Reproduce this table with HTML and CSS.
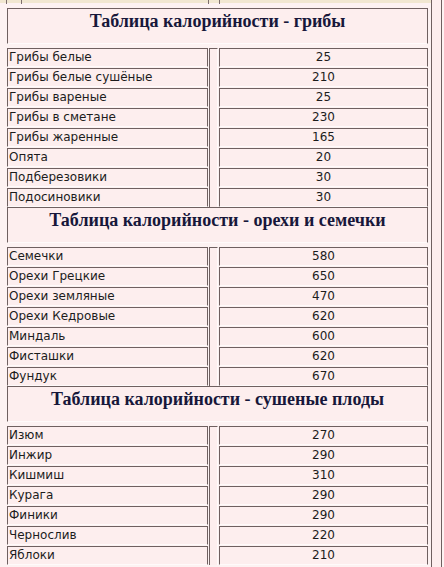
FILE: index.html
```html
<!DOCTYPE html>
<html lang="ru">
<head>
<meta charset="utf-8">
<title>Таблица калорийности</title>
<link rel="stylesheet" href="styles.css">
</head>
<body>
<div class="page">
  <div class="main">
    <div class="topband"><span class="tick"></span><span class="tick"></span><span class="tick"></span><span class="tick"></span></div>

    <section class="sec">
      <h2 class="hd">Таблица калорийности - грибы</h2>
      <div class="sp sp8"></div>
      <div class="nm">Грибы белые</div><div class="vl">25</div>
      <div class="nm">Грибы белые сушёные</div><div class="vl">210</div>
      <div class="nm">Грибы вареные</div><div class="vl">25</div>
      <div class="nm">Грибы в сметане</div><div class="vl">230</div>
      <div class="nm">Грибы жаренные</div><div class="vl">165</div>
      <div class="nm">Опята</div><div class="vl">20</div>
      <div class="nm">Подберезовики</div><div class="vl">30</div>
      <div class="nm">Подосиновики</div><div class="vl">30</div>
    </section>

    <section class="sec">
      <h2 class="hd">Таблица калорийности - орехи и семечки</h2>
      <div class="sp sp7"></div>
      <div class="nm">Семечки</div><div class="vl">580</div>
      <div class="nm">Орехи Грецкие</div><div class="vl">650</div>
      <div class="nm">Орехи земляные</div><div class="vl">470</div>
      <div class="nm">Орехи Кедровые</div><div class="vl">620</div>
      <div class="nm">Миндаль</div><div class="vl">600</div>
      <div class="nm">Фисташки</div><div class="vl">620</div>
      <div class="nm">Фундук</div><div class="vl">670</div>
    </section>

    <section class="sec">
      <h2 class="hd">Таблица калорийности - сушеные плоды</h2>
      <div class="sp sp7"></div>
      <div class="nm">Изюм</div><div class="vl">270</div>
      <div class="nm">Инжир</div><div class="vl">290</div>
      <div class="nm">Кишмиш</div><div class="vl">310</div>
      <div class="nm">Курага</div><div class="vl">290</div>
      <div class="nm">Финики</div><div class="vl">290</div>
      <div class="nm">Чернослив</div><div class="vl">220</div>
      <div class="nm">Яблоки</div><div class="vl">210</div>
    </section>
  </div>
  <div class="rstrip"></div>
</div>
</body>
</html>
```

FILE: styles.css
```css
html, body {
  margin: 0;
  padding: 0;
  background: #fdf2f2;
}

.page {
  display: flex;
  align-items: stretch;
  min-height: 567px;
  overflow: hidden;
}

.main {
  width: 421px;
  padding-left: 7px;
  flex: none;
}

.topband {
  display: flex;
  height: 3px;
  margin-left: -7px;
  margin-right: -3px;
  margin-bottom: 5px;
  background: #f1e7d1;
}

.tick {
  width: 1px;
  height: 4px;
  background: #7d6e6e;
  flex: none;
}
.tick:nth-child(1) { margin-left: 6px; }
.tick:nth-child(2) { margin-left: 14px; }
.tick:nth-child(3) { margin-left: 186px; }
.tick:nth-child(4) { margin-left: 10px; }

.sec {
  display: grid;
  grid-template-columns: 201px 9px 209px;
  column-gap: 1px;
  row-gap: 1px;
}

.hd {
  grid-column: 1 / -1;
  grid-row: 1;
  margin: 0 0 3px 0;
  height: 36px;
  box-sizing: border-box;
  padding: 2px 0 0 0;
  border: 1px solid #6f6060;
  border-bottom-color: #fffafa;
  background: #fdeeee;
  font-family: "Liberation Serif", "Times New Roman", serif;
  font-weight: bold;
  font-size: 18px;
  line-height: 21px;
  color: #17173a;
  text-align: center;
}

.sp {
  grid-column: 2;
  box-sizing: border-box;
  border-left: 1px solid #6f6060;
  border-top: 1px solid #6f6060;
  border-right: 1px solid #fffafa;
  background: #fdeeee;
}
.sp8 { grid-row: 2 / span 8; }
.sp7 { grid-row: 2 / span 7; }

.nm, .vl {
  box-sizing: border-box;
  height: 19px;
  border: 1px solid #6f6060;
  border-bottom-color: #fffafa;
  background: #fdeeee;
  font-family: "DejaVu Sans", Verdana, sans-serif;
  font-size: 12px;
  line-height: 17px;
  color: #1c1c1c;
  white-space: nowrap;
  overflow: hidden;
}

.nm {
  grid-column: 1;
  padding-left: 1px;
}

.vl {
  grid-column: 3;
  text-align: center;
}

.rstrip {
  flex: none;
  width: 11px;
  margin-left: 3px;
  box-sizing: border-box;
  border-left: 1px solid #6f6060;
  border-right: 1px solid #6f6060;
  background: #fdeeee;
}
```
